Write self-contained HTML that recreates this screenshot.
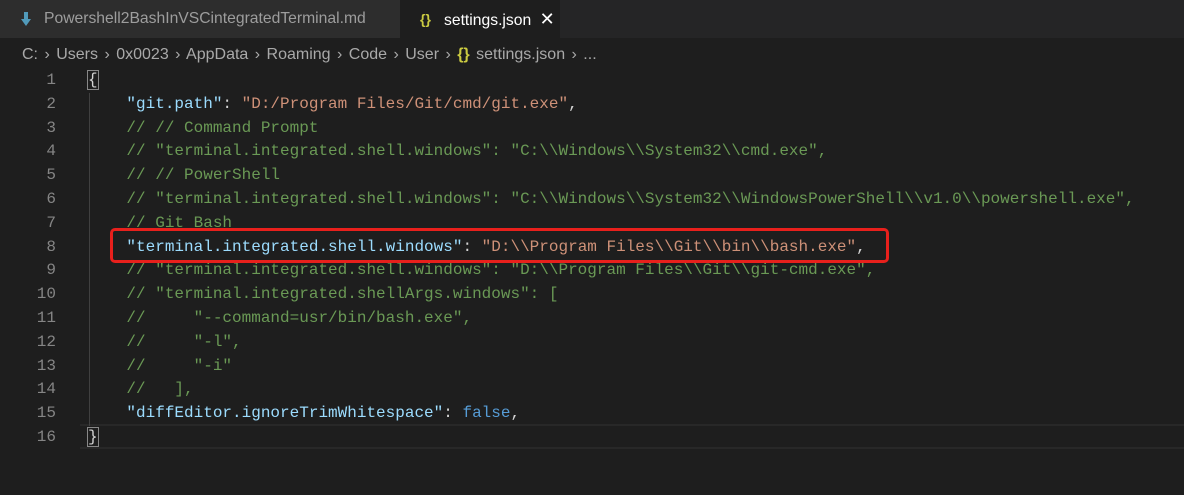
<!DOCTYPE html>
<html><head><meta charset="utf-8"><style>
*{margin:0;padding:0;box-sizing:border-box}
body{width:1184px;height:495px;background:#1e1e1e;overflow:hidden;position:relative;font-family:"Liberation Sans",sans-serif}
.tabs{position:absolute;left:0;top:0;width:1184px;height:38px;background:#252526}
.tab1{position:absolute;left:0;top:0;width:400px;height:38px;background:#2d2d2d;color:#9d9d9d;font-size:15.7px;line-height:38px;padding-left:44px}
.tab2{position:absolute;left:400px;top:0;width:160px;height:38px;background:#1e1e1e;color:#fff;font-size:15.7px;line-height:38px;padding-left:44px}
.crumb{position:absolute;left:22px;top:44px;color:#a9a9a9;font-size:16px;line-height:22px;white-space:pre;word-spacing:2px}
.code{position:absolute;top:69px;left:0;font-family:"Liberation Mono",monospace;font-size:16px;line-height:23.8px;white-space:pre}
.ln{position:absolute;left:0;width:56px;text-align:right;color:#858585}
.tx{position:absolute;left:88px;color:#d4d4d4}
.k{color:#9cdcfe}.s{color:#ce9178}.c{color:#6a9955}.b{color:#569cd6}
.guide{position:absolute;left:89px;top:93px;width:1px;height:333px;background:#404040}
.cur{position:absolute;left:80px;top:424px;width:1104px;height:25px;border-top:2px solid #282828;border-bottom:2px solid #282828}
.box{position:absolute;left:110px;top:228px;width:779px;height:35px;border:3px solid #e8201c;border-radius:5px}
</style></head><body>
<div class="tabs">
<div class="tab1"><svg style="position:absolute;left:20px;top:12px" width="12" height="14" viewBox="0 0 12 14"><path d="M4 0h4v7h3l-5 7-5-7h3z" fill="#519aba"/></svg>Powershell2BashInVSCintegratedTerminal.md</div>
<div class="tab2"><span style="position:absolute;left:20px;color:#cbcb41;font-weight:bold;font-size:14px">{}</span>settings.json <span style="font-size:18px;margin-left:4px">✕</span></div>
</div>
<div class="crumb">C: › Users › 0x0023 › AppData › Roaming › Code › User › <span style="color:#cbcb41;font-weight:bold">{}</span> settings.json › ...</div>
<div class="cur"></div>
<div class="guide"></div>
<div class="code">
<div class="ln" style="top:0">1</div><div class="ln" style="top:23.8px">2</div><div class="ln" style="top:47.6px">3</div><div class="ln" style="top:71.4px">4</div><div class="ln" style="top:95.2px">5</div><div class="ln" style="top:119px">6</div><div class="ln" style="top:142.8px">7</div><div class="ln" style="top:166.6px">8</div><div class="ln" style="top:190.4px">9</div><div class="ln" style="top:214.2px">10</div><div class="ln" style="top:238px">11</div><div class="ln" style="top:261.8px">12</div><div class="ln" style="top:285.6px">13</div><div class="ln" style="top:309.4px">14</div><div class="ln" style="top:333.2px">15</div><div class="ln" style="top:357px">16</div>
<div class="tx" style="top:0"><span style="outline:1px solid #888">{</span>
    <span class="k">"git.path"</span>: <span class="s">"D:/Program Files/Git/cmd/git.exe"</span>,
<span class="c">    // // Command Prompt
    // "terminal.integrated.shell.windows": "C:\\Windows\\System32\\cmd.exe",
    // // PowerShell
    // "terminal.integrated.shell.windows": "C:\\Windows\\System32\\WindowsPowerShell\\v1.0\\powershell.exe",
    // Git Bash</span>
    <span class="k">"terminal.integrated.shell.windows"</span>: <span class="s">"D:\\Program Files\\Git\\bin\\bash.exe"</span>,
<span class="c">    // "terminal.integrated.shell.windows": "D:\\Program Files\\Git\\git-cmd.exe",
    // "terminal.integrated.shellArgs.windows": [
    //     "--command=usr/bin/bash.exe",
    //     "-l",
    //     "-i"
    //   ],</span>
    <span class="k">"diffEditor.ignoreTrimWhitespace"</span>: <span class="b">false</span>,
<span style="outline:1px solid #888">}</span></div>
</div>
<div class="box"></div>
</body></html>
